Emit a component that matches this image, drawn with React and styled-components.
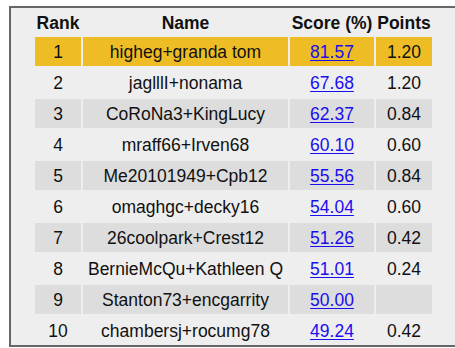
import React from "react";
import styled, { createGlobalStyle } from "styled-components";

const Global = createGlobalStyle`
  body {
    margin: 0;
    background: #ffffff;
    overflow: hidden;
    font-family: "Liberation Sans", Arial, sans-serif;
  }
`;

const Frame = styled.div`
  box-sizing: border-box;
  margin: 6px 0 0 9px;
  width: 449px;
  height: 341px;
  border: 2px solid #666666;
  background: #eeeeee;
  overflow: hidden;
  padding-top: 1px;
`;

const Table = styled.table`
  margin: 0 auto;
  border-spacing: 2px;
  table-layout: fixed;
  width: 401px;
  font-size: 17.5px;
  color: #111111;
`;

const Head = styled.th`
  font-weight: bold;
  padding: 2px 0 2px;
  line-height: 20px;
  text-align: center;
  width: ${(p) => p.$w}px;
  white-space: nowrap;
`;

const Row = styled.tr`
  background: ${(p) => (p.$top ? "#eebd26" : p.$odd ? "#dddddd" : "transparent")};
`;

const Cell = styled.td`
  height: 29px;
  padding: 0;
  line-height: 20px;
  text-align: center;
  white-space: nowrap;
`;

const ScoreLink = styled.a`
  color: #1a0dee;
  text-decoration: underline;
  text-underline-offset: 2px;
`;

const rows = [
  ["1", "higheg+granda tom", "81.57", "1.20"],
  ["2", "jaglllI+nonama", "67.68", "1.20"],
  ["3", "CoRoNa3+KingLucy", "62.37", "0.84"],
  ["4", "mraff66+Irven68", "60.10", "0.60"],
  ["5", "Me20101949+Cpb12", "55.56", "0.84"],
  ["6", "omaghgc+decky16", "54.04", "0.60"],
  ["7", "26coolpark+Crest12", "51.26", "0.42"],
  ["8", "BernieMcQu+Kathleen Q", "51.01", "0.24"],
  ["9", "Stanton73+encgarrity", "50.00", ""],
  ["10", "chambersj+rocumg78", "49.24", "0.42"],
];

export default function App() {
  return (
    <>
      <Global />
      <Frame>
        <Table>
          <thead>
            <tr>
              <Head $w={46}>Rank</Head>
              <Head $w={205}>Name</Head>
              <Head $w={84}>Score (%)</Head>
              <Head $w={56}>Points</Head>
            </tr>
          </thead>
          <tbody>
            {rows.map(([rank, name, score, pts], i) => (
              <Row key={rank} $top={i === 0} $odd={i % 2 === 0}>
                <Cell>{rank}</Cell>
                <Cell>{name}</Cell>
                <Cell>
                  <ScoreLink href="#">{score}</ScoreLink>
                </Cell>
                <Cell>{pts}</Cell>
              </Row>
            ))}
          </tbody>
        </Table>
      </Frame>
    </>
  );
}
